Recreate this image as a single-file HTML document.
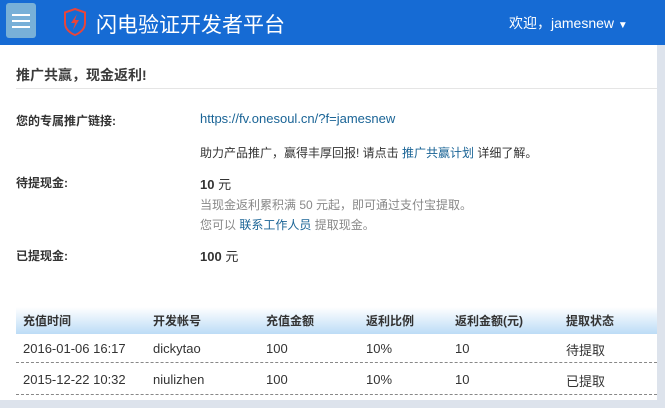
<!DOCTYPE html>
<html><head><meta charset="utf-8"><style>
*{margin:0;padding:0;box-sizing:border-box}
body{width:665px;height:408px;overflow:hidden;background:#dde3ec;font-family:"Liberation Sans","Noto Sans CJK SC",sans-serif;font-size:12px;color:#333;position:relative}
.hdr{position:absolute;left:0;top:0;width:665px;height:45px;background:#166bd4}
.btn{position:absolute;left:6px;top:3px;width:30px;height:35px;background:#78b0d8;border-radius:3px}
.btn i{position:absolute;left:6px;width:18px;height:2px;background:#fff}
.ttl{position:absolute;left:96px;top:9px;font-size:21px;color:#fff}
.wel{position:absolute;left:509px;top:13px;font-size:14px;color:#fff}
.main{position:absolute;left:0;top:45px;width:657px;height:355px;background:#fff}
.a{position:absolute;white-space:nowrap}
.b{font-weight:bold}
.lk{color:#1a6496}
.g{color:#888}
.th{position:absolute;left:16px;top:307px;width:641px;height:27px;background:linear-gradient(#fff,#bcdcf6)}
.dl{position:absolute;left:16px;width:641px;border-top:1px dashed #888}
</style></head><body>
<div class="hdr">
<div class="btn"><i style="top:11px"></i><i style="top:17px"></i><i style="top:23px"></i></div>
<svg style="position:absolute;left:63px;top:8px" width="24" height="28" viewBox="0 0 24 28"><path d="M12 1 L22 4.5 V15 C22 21 17 25 12 27 C7 25 2 21 2 15 V4.5 Z" fill="none" stroke="#e8453a" stroke-width="2"/><path d="M14 6 L8 15 H12 L10 22 L16 12 H12 Z" fill="#e8453a"/></svg>
<div class="ttl">闪电验证开发者平台</div>
<div class="wel">欢迎，jamesnew <span style="font-size:10px">▼</span></div>
</div>
<div class="main"></div>
<div class="a b" style="left:16px;top:65px;font-size:14px;color:#3a3a3a">推广共赢，现金返利!</div>
<div style="position:absolute;left:16px;top:88px;width:641px;border-top:1px solid #e5e5e5"></div>
<div class="a b" style="left:16px;top:112px">您的专属推广链接:</div>
<div class="a lk" style="left:200px;top:111px;font-size:13px">https://fv.onesoul.cn/?f=jamesnew</div>
<div class="a" style="left:200px;top:144px">助力产品推广，赢得丰厚回报! 请点击 <span class="lk">推广共赢计划</span> 详细了解。</div>
<div class="a b" style="left:16px;top:174px">待提现金:</div>
<div class="a" style="left:200px;top:174px;font-size:13px"><b>10</b> 元</div>
<div class="a g" style="left:200px;top:196px">当现金返利累积满 50 元起，即可通过支付宝提取。</div>
<div class="a g" style="left:200px;top:216px">您可以 <span class="lk">联系工作人员</span> 提取现金。</div>
<div class="a b" style="left:16px;top:247px">已提现金:</div>
<div class="a" style="left:200px;top:246px;font-size:13px"><b>100</b> 元</div>
<div class="th"></div>
<div class="a b" style="left:23px;top:312px">充值时间</div>
<div class="a b" style="left:153px;top:312px">开发帐号</div>
<div class="a b" style="left:266px;top:312px">充值金额</div>
<div class="a b" style="left:366px;top:312px">返利比例</div>
<div class="a b" style="left:455px;top:312px">返利金额(元)</div>
<div class="a b" style="left:566px;top:312px">提取状态</div>
<div class="a" style="left:23px;top:341px;font-size:13px">2016-01-06 16:17</div>
<div class="a" style="left:153px;top:341px;font-size:13px">dickytao</div>
<div class="a" style="left:266px;top:341px;font-size:13px">100</div>
<div class="a" style="left:366px;top:341px;font-size:13px">10%</div>
<div class="a" style="left:455px;top:341px;font-size:13px">10</div>
<div class="a" style="left:566px;top:340px;font-size:13px">待提取</div>
<div class="dl" style="top:362px"></div>
<div class="a" style="left:23px;top:372px;font-size:13px">2015-12-22 10:32</div>
<div class="a" style="left:153px;top:372px;font-size:13px">niulizhen</div>
<div class="a" style="left:266px;top:372px;font-size:13px">100</div>
<div class="a" style="left:366px;top:372px;font-size:13px">10%</div>
<div class="a" style="left:455px;top:372px;font-size:13px">10</div>
<div class="a" style="left:566px;top:371px;font-size:13px">已提取</div>
<div class="dl" style="top:394px"></div>
</body></html>
